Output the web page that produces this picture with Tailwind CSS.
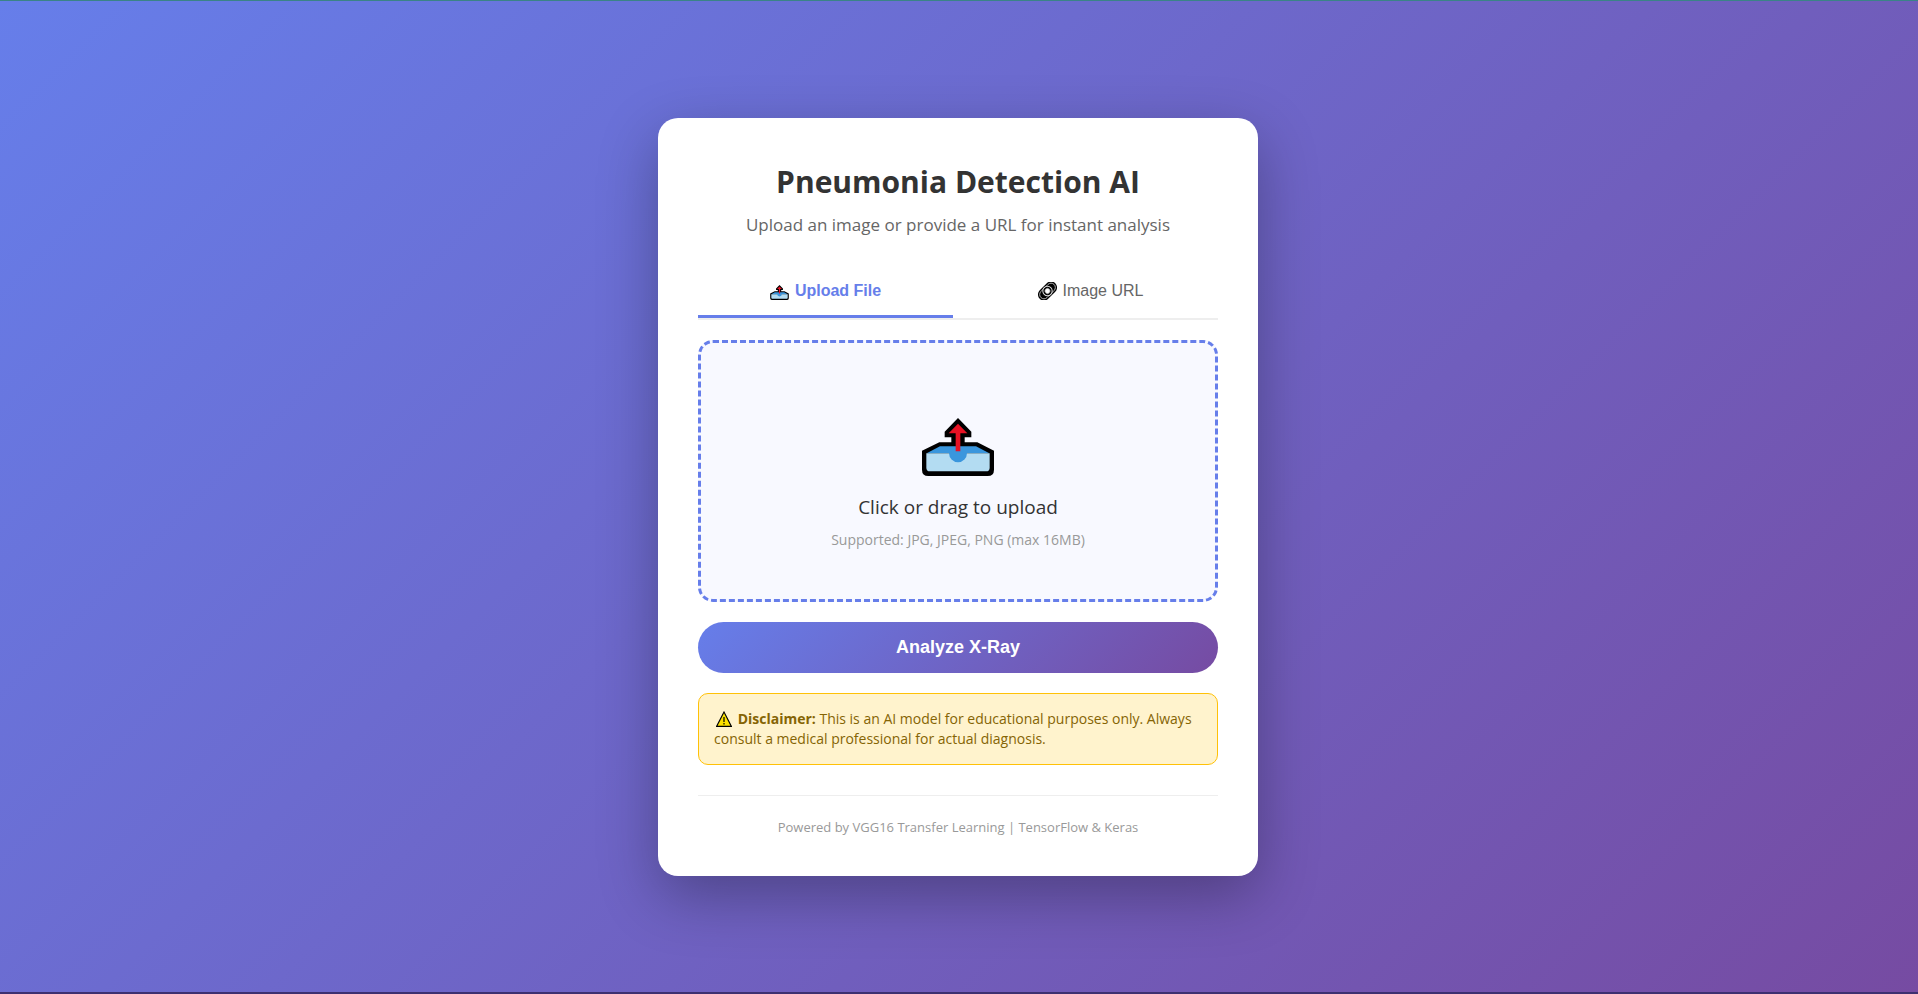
<!DOCTYPE html>
<html lang="en">
<head>
<meta charset="utf-8">
<meta name="viewport" content="width=device-width, initial-scale=1">
<title>Pneumonia Detection AI</title>
<script src="https://cdn.jsdelivr.net/npm/@tailwindcss/browser@4"></script>
</head>
<body class="flex min-h-screen items-center justify-center border-t border-b-2 border-t-[#3a8387] border-b-[#3d3070] bg-linear-[135deg,#667eea_0%,#764ba2_100%] pt-[21px] pr-[22px] pb-5 pl-5 font-['Open_Sans','Noto_Sans',sans-serif] text-[#333]">
<svg class="hidden" aria-hidden="true">
  <symbol id="outbox" viewBox="66 53 216 174">
    <path d="M66 151 118 126H154V111H134V94L174 53 214 94V111H194V126H232L282 151V208Q282 227 263 227H85Q66 227 66 208Z" fill="#000"/>
    <path d="M80 159 120 138H228L268 159Z" fill="#3a96dd"/>
    <path d="M79 159H269V202Q269 213 258 213H90Q79 213 79 202Z" fill="#b3dcf2"/>
    <path d="M147 158H201A27 28 0 0 1 147 158Z" fill="#3a96dd"/>
    <path d="M174 70 202 99H181V153H167V99H146Z" fill="#e81224"/>
  </symbol>
</svg>
<main class="w-full max-w-[600px] rounded-[20px] bg-white p-10 shadow-[0_20px_60px_rgba(0,0,0,0.3)]">
  <header class="mb-[30px] text-center">
    <h1 class="mb-2 text-[30px] leading-[47px] font-bold">Pneumonia Detection AI</h1>
    <p class="text-[17px] leading-6 text-[#666]">Upload an image or provide a URL for instant analysis</p>
  </header>

  <div role="tablist" class="mb-5 flex gap-2.5 border-b-2 border-[#eee] font-['Liberation_Sans',Arial,sans-serif] text-base leading-[18px]">
    <button type="button" role="tab" aria-selected="true" class="flex flex-1 cursor-pointer items-center justify-center gap-1.5 border-b-3 border-[#667eea] py-[15px] font-bold text-[#667eea]">
      <svg class="mt-0.5 h-[15px] w-[19px]" aria-hidden="true"><use href="#outbox"/></svg>
      Upload File
    </button>
    <button type="button" role="tab" aria-selected="false" class="flex flex-1 cursor-pointer items-center justify-center gap-1.5 border-b-3 border-transparent py-[15px] text-[#666]">
      <svg class="h-[18px] w-[19px]" viewBox="0 0 19 18" fill="none" aria-hidden="true">
        <g transform="rotate(-45 9.5 9)">
          <rect x="-1.5" y="3" width="22" height="12" rx="6" fill="#000"/>
          <rect x=".2" y="4.7" width="18.6" height="8.6" rx="4.3" stroke="#bbb" stroke-width=".9"/>
          <rect x="4.8" y="4.3" width="9.4" height="9.4" rx="4.7" fill="#000" stroke="#ddd"/>
          <rect x="6.9" y="6.4" width="5.2" height="5.2" rx="2.6" fill="#fff" stroke="#999" stroke-width=".6"/>
        </g>
      </svg>
      Image URL
    </button>
  </div>

  <form>
    <label class="mb-5 flex cursor-pointer flex-col items-center rounded-[15px] border-3 border-dashed border-[#667eea] bg-[#f8f9ff] px-5 pt-[75px] pb-[49px] text-center">
      <svg class="mb-[18px] h-[58px] w-[72px]" aria-hidden="true"><use href="#outbox"/></svg>
      <span class="mb-2.5 text-[19px] leading-[26px]">Click or drag to upload</span>
      <span class="text-sm leading-5 text-[#999]">Supported: JPG, JPEG, PNG (max 16MB)</span>
      <input type="file" accept=".jpg,.jpeg,.png" class="hidden">
    </label>
    <button type="button" class="w-full cursor-pointer rounded-full bg-linear-[135deg,#667eea_0%,#764ba2_100%] py-[15px] font-['Liberation_Sans',Arial,sans-serif] text-lg leading-[21px] font-bold text-white">Analyze X-Ray</button>
  </form>

  <p class="mt-5 rounded-[10px] border border-[#ffc107] bg-[#fff3cd] p-[15px] text-sm leading-5 text-[#856404]">
    <svg class="mr-0.5 ml-0.5 inline h-4 w-4 align-[-3px]" viewBox="0 0 16 16" aria-hidden="true">
      <path d="M8 1 15.4 15.4H.6Z" fill="#fce100" stroke="#000" stroke-width="1.1"/>
      <path d="M8 6V11M8 12V13.4" stroke="#000" stroke-width="1.2"/>
    </svg>
    <strong>Disclaimer:</strong> This is an AI model for educational purposes only. Always consult a medical professional for actual diagnosis.
  </p>

  <footer class="mt-[30px] border-t border-[#eee] pt-[22px] text-center text-[13px] leading-[18px] text-[#999]">Powered by VGG16 Transfer Learning | TensorFlow &amp; Keras</footer>
</main>
</body>
</html>
